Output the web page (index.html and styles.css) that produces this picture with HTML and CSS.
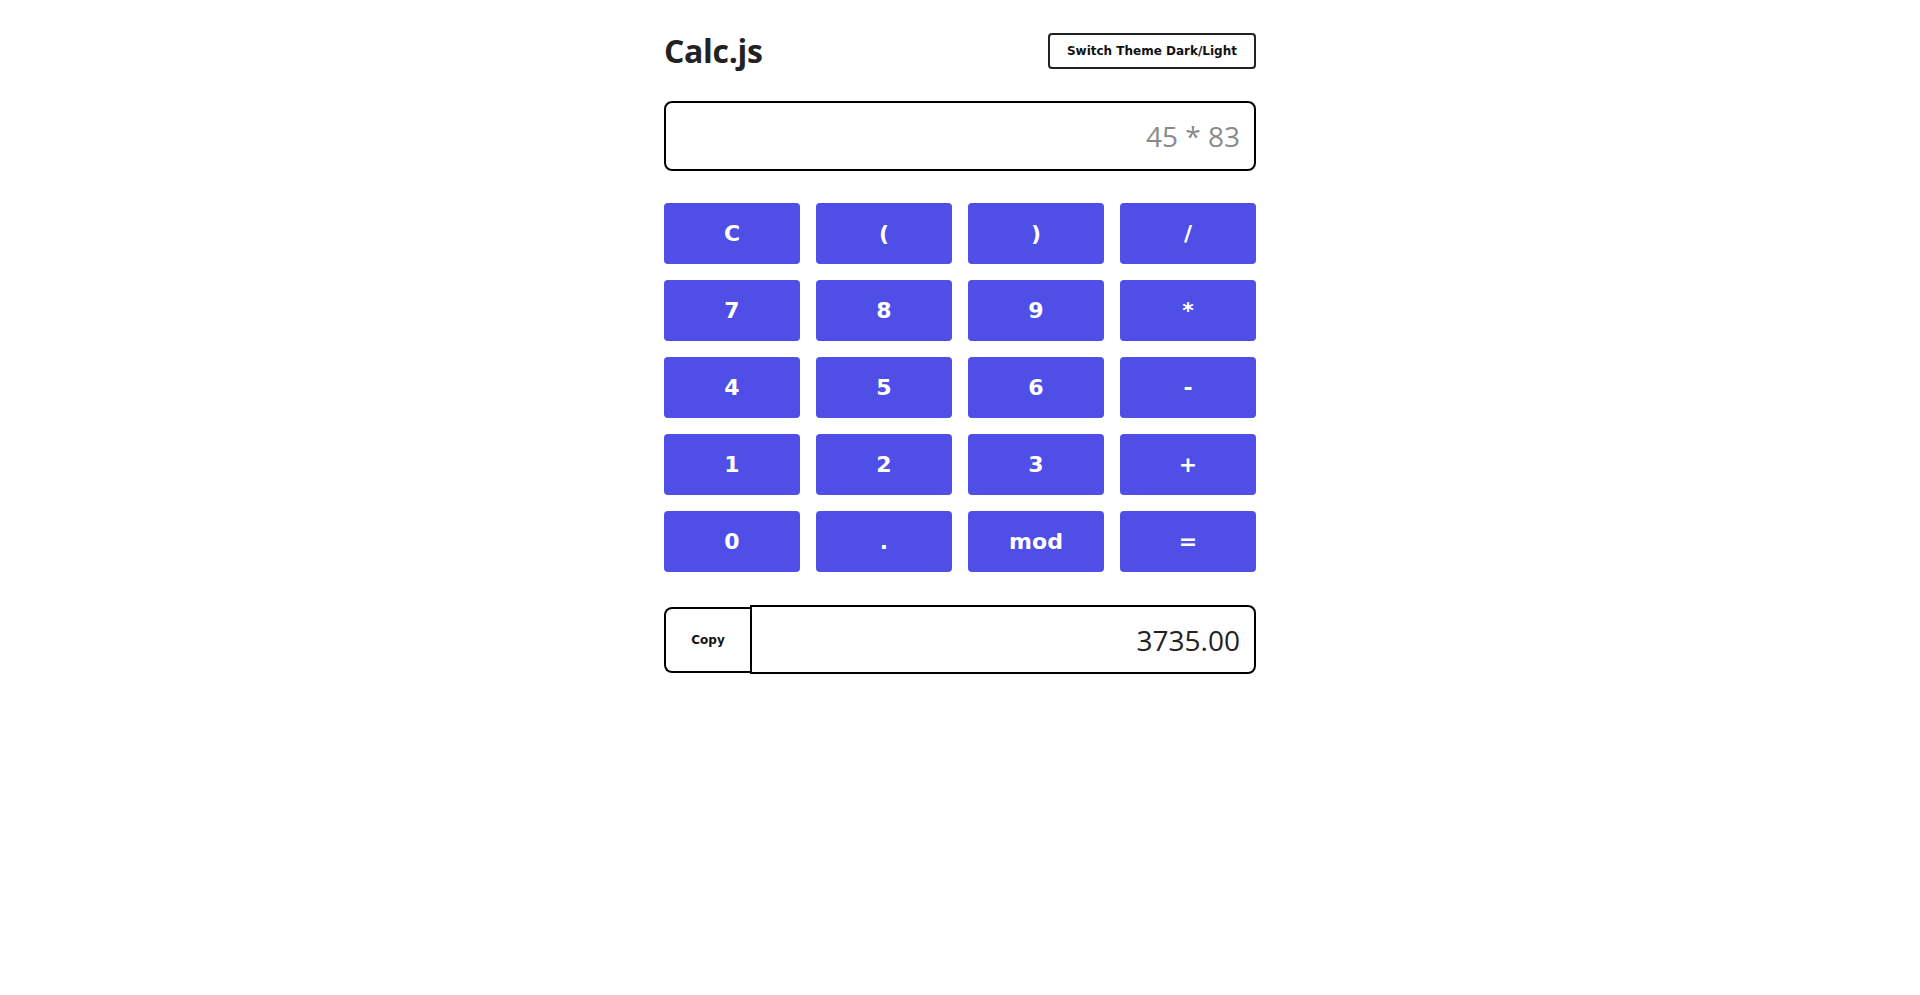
FILE: index.html
```html
<!DOCTYPE html>
<html lang="en">
<head>
<meta charset="utf-8">
<title>Calc.js</title>
<link rel="stylesheet" href="styles.css">
</head>
<body>
<main class="calc">
  <header class="header">
    <h1 class="title">Calc.js</h1>
    <button class="theme-btn">Switch Theme Dark/Light</button>
  </header>
  <input class="expr" type="text" placeholder="45 * 83">
  <div class="keys">
    <button class="key">C</button>
    <button class="key">(</button>
    <button class="key">)</button>
    <button class="key">/</button>
    <button class="key">7</button>
    <button class="key">8</button>
    <button class="key">9</button>
    <button class="key">*</button>
    <button class="key">4</button>
    <button class="key">5</button>
    <button class="key">6</button>
    <button class="key">-</button>
    <button class="key">1</button>
    <button class="key">2</button>
    <button class="key">3</button>
    <button class="key">+</button>
    <button class="key">0</button>
    <button class="key">.</button>
    <button class="key">mod</button>
    <button class="key">=</button>
  </div>
  <div class="result">
    <button class="copy-btn">Copy</button>
    <input class="result-field" type="text" value="3735.00" readonly>
  </div>
</main>
</body>
</html>
```
FILE: styles.css
```css
* {
  box-sizing: border-box;
}

body {
  margin: 0;
  background: #ffffff;
  font-family: "Open Sans", "Noto Sans", sans-serif;
  color: #222222;
}

.calc {
  width: 592px;
  margin: 0 auto;
  padding-top: 33px;
  display: flex;
  flex-direction: column;
}

.header {
  height: 36px;
  display: flex;
  align-items: center;
  justify-content: space-between;
}

.title {
  margin: 0;
  font-family: "Open Sans", sans-serif;
  font-weight: 700;
  font-size: 32px;
  letter-spacing: -0.3px;
  color: #222222;
  line-height: 36px;
}

.theme-btn {
  height: 36px;
  padding: 0 17px;
  border: 2px solid #222222;
  border-radius: 4px;
  background: #ffffff;
  color: #111111;
  font-family: "DejaVu Sans", sans-serif;
  font-weight: 700;
  font-size: 12px;
  cursor: pointer;
}

.expr {
  margin-top: 32px;
  height: 70px;
  width: 100%;
  border: 2px solid #000000;
  border-radius: 8px;
  padding: 0 14px;
  text-align: right;
  font-family: "Open Sans", sans-serif;
  font-size: 28px;
  color: #222222;
  outline: none;
}

.expr::placeholder {
  color: #8a8a8a;
}

.keys {
  margin-top: 32px;
  display: grid;
  grid-template-columns: repeat(4, 136px);
  grid-auto-rows: 61px;
  column-gap: 16px;
  row-gap: 16px;
}

.key {
  border: none;
  border-radius: 4px;
  background: #4f4fe8;
  color: #ffffff;
  font-family: "DejaVu Sans", sans-serif;
  font-weight: 700;
  font-size: 22px;
  cursor: pointer;
}

.result {
  margin-top: 33px;
  height: 69px;
  display: flex;
  align-items: center;
}

.copy-btn {
  width: 86px;
  flex: none;
  height: 66px;
  border: 2px solid #000000;
  border-right: none;
  border-radius: 8px 0 0 8px;
  background: #ffffff;
  color: #111111;
  font-family: "DejaVu Sans", sans-serif;
  font-weight: 700;
  font-size: 12px;
  cursor: pointer;
  padding: 0;
}

.result-field {
  flex: 1;
  min-width: 0;
  height: 69px;
  border: 2px solid #000000;
  border-radius: 0 8px 8px 0;
  padding: 0 14px;
  text-align: right;
  font-family: "Open Sans", sans-serif;
  font-size: 28px;
  color: #222222;
  outline: none;
}
```
